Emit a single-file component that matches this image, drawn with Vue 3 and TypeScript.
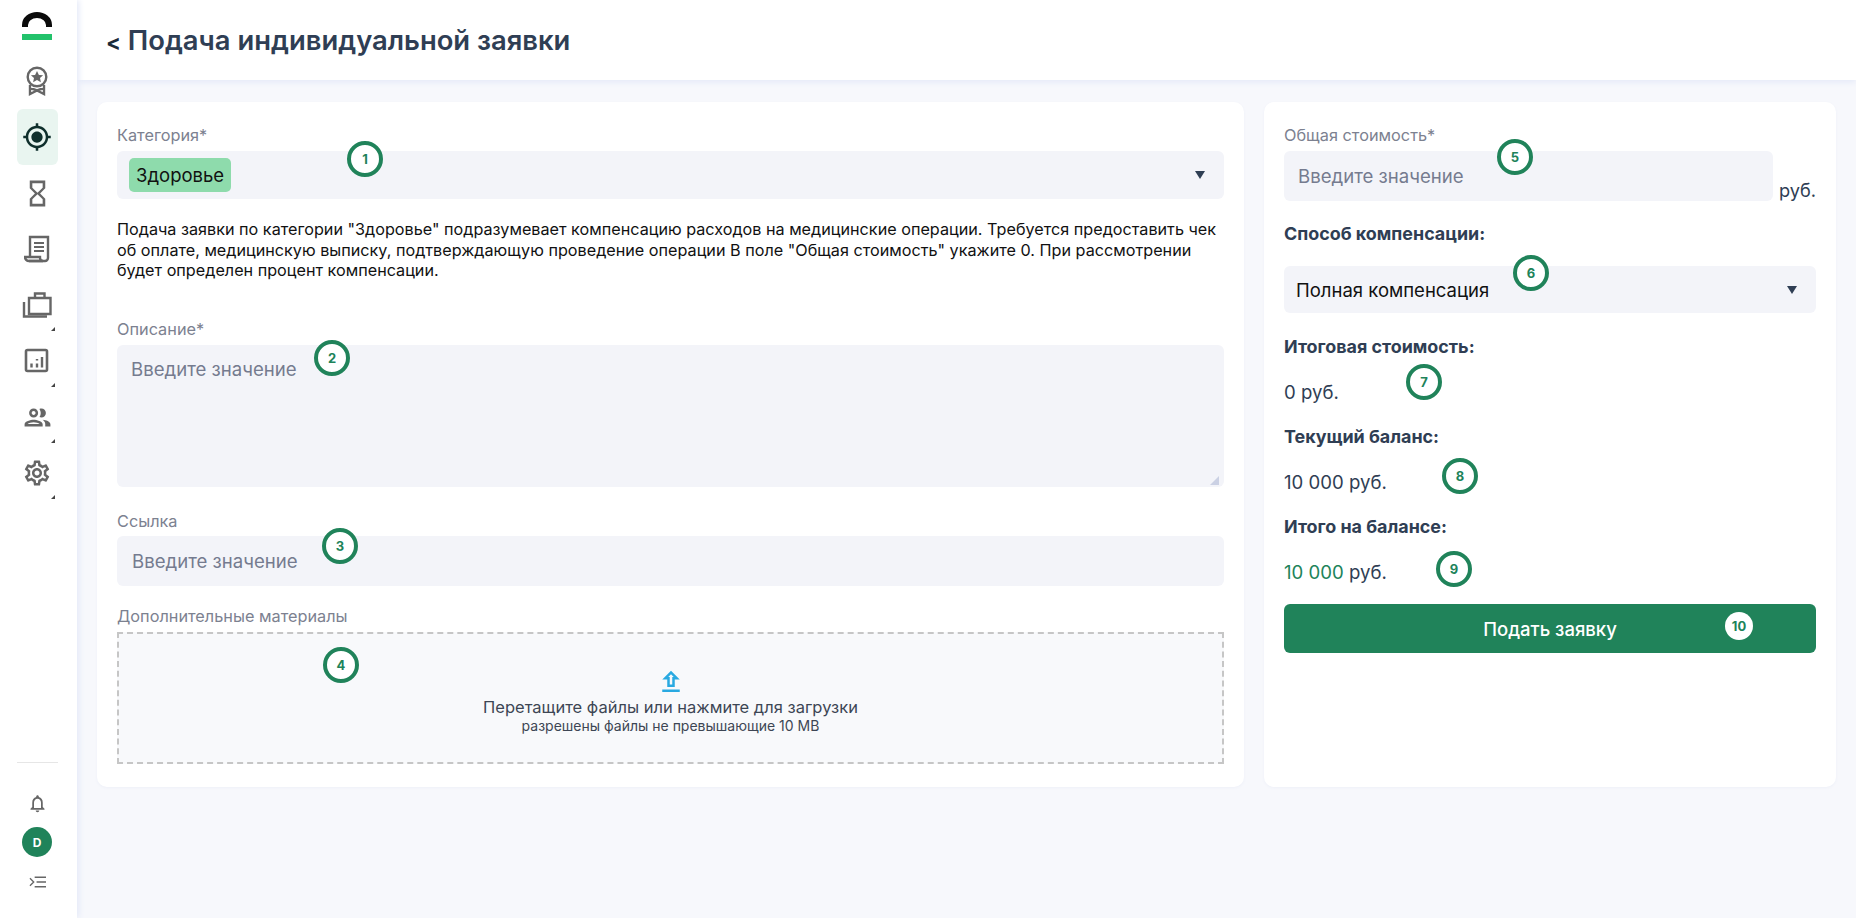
<script setup lang="ts">
interface Mark { n: number; x: number; y: number; light?: boolean }
const marks: Mark[] = [
  { n: 1, x: 365, y: 159 }, { n: 2, x: 332, y: 358 }, { n: 3, x: 340, y: 546 },
  { n: 4, x: 341, y: 665 }, { n: 5, x: 1515, y: 157 }, { n: 6, x: 1531, y: 273 },
  { n: 7, x: 1424, y: 382 }, { n: 8, x: 1460, y: 476 }, { n: 9, x: 1454, y: 569 },
  { n: 10, x: 1739, y: 626, light: true },
]
const markStyle = (m: Mark) => ({ left: `${m.x}px`, top: `${m.y}px` })
</script>

<template>
  <div class="page">
    <aside class="sidebar">
      <svg class="logo" width="30" height="28" viewBox="0 0 30 28">
        <path d="M3 15V13A12 10 0 0 1 27 13v2" fill="none" stroke="#0b0b0b" stroke-width="6" />
        <rect x="0" y="22" width="30" height="6" fill="#22c26b" />
      </svg>
      <nav class="nav">
        <a class="item">
          <svg width="26" height="30" viewBox="0 0 26 30" fill="none" stroke="#666" stroke-width="2.400">
            <circle cx="13" cy="11" r="9.300" />
            <path d="M13 5l1.900 3.900 4.200.4-3.100 2.800.9 4.100-3.900-2.100-3.900 2.100.9-4.100-3.100-2.800 4.200-.4z" fill="#666" stroke="none" />
            <path d="M6 19v9l7-3.500 7 3.500v-9M6 22l7 2.500 7-2.500" />
          </svg>
        </a>
        <a class="item active">
          <svg width="30" height="30" viewBox="0 0 24 24" fill="#0f2f2c">
            <path d="M12 7.500c-2.490 0-4.500 2.010-4.500 4.500s2.010 4.500 4.500 4.500 4.500-2.010 4.500-4.500-2.010-4.500-4.500-4.500zm8.940 3.500c-.46-4.170-3.770-7.480-7.940-7.940V1h-2v2.060C6.830 3.520 3.520 6.830 3.060 11H1v2h2.060c.46 4.170 3.770 7.480 7.940 7.940V23h2v-2.060c4.170-.46 7.480-3.770 7.940-7.940H23v-2h-2.060zM12 19c-3.870 0-7-3.130-7-7s3.130-7 7-7 7 3.130 7 7-3.130 7-7 7z" />
          </svg>
        </a>
        <a class="item">
          <svg width="31" height="31" viewBox="0 0 24 24" fill="#666">
            <path d="M6 2v6h.01L6 8.010 10 12l-4 4 .01.01H6V22h12v-5.990h-.01L18 16l-4-4 4-3.990-.01-.01H18V2H6zm10 14.500V20H8v-3.500l4-4 4 4zm-4-5l-4-4V4h8v3.500l-4 4z" />
          </svg>
        </a>
        <a class="item">
          <svg width="26" height="28" viewBox="0 0 26 28" fill="none" stroke="#666" stroke-width="2.400">
            <path d="M6 21V2h18v21a3 3 0 0 1-3 3H5" />
            <path d="M1 22h15v1a3 3 0 0 0 3 3H5a4 4 0 0 1-4-4z" />
            <path d="M10 8h10M10 12h10M10 16h10" stroke-width="2" />
          </svg>
        </a>
        <a class="item more">
          <svg width="30" height="28" viewBox="0 0 30 28" fill="none" stroke="#666" stroke-width="2.400">
            <path d="M7 7h21.500v16H7z" />
            <path d="M13 7V2.500h9.500V7" />
            <path d="M2 11v14.500h23" />
          </svg>
        </a>
        <a class="item more">
          <svg width="26" height="26" viewBox="0 0 26 26" fill="none" stroke="#666" stroke-width="2.600">
            <rect x="2" y="2" width="21" height="21" rx="1.500" />
            <path d="M7.500 15.500v4M13 11v1.500M13 15.500v4M18 9v10.500" stroke-width="2.400" />
          </svg>
        </a>
        <a class="item more">
          <svg width="31" height="31" viewBox="0 0 24 24" fill="#666">
            <path d="M9 13.750c-2.340 0-7 1.170-7 3.500V19h14v-1.750c0-2.330-4.660-3.500-7-3.500zM4.340 17c.84-.58 2.870-1.250 4.660-1.250s3.820.67 4.660 1.250H4.340zM9 12c1.930 0 3.500-1.570 3.500-3.500S10.930 5 9 5 5.500 6.570 5.500 8.500 7.070 12 9 12zm0-5c.83 0 1.500.67 1.500 1.500S9.830 10 9 10s-1.500-.67-1.500-1.500S8.170 7 9 7zm7.040 6.810c1.160.84 1.960 1.960 1.960 3.440V19h4v-1.750c0-2.020-3.500-3.170-5.960-3.440zM15 12c1.930 0 3.500-1.570 3.500-3.500S16.930 5 15 5c-.54 0-1.040.13-1.500.35.630.89 1 1.980 1 3.150s-.37 2.260-1 3.150c.46.220.96.350 1.500.350z" />
          </svg>
        </a>
        <a class="item more">
          <svg width="30" height="30" viewBox="0 0 24 24" fill="#666">
            <path d="M19.430 12.980c.04-.32.07-.64.07-.98 0-.34-.03-.66-.07-.98l2.110-1.650c.19-.15.24-.42.12-.64l-2-3.460c-.09-.16-.26-.25-.44-.25-.06 0-.12.01-.17.03l-2.490 1c-.52-.4-1.080-.73-1.690-.98l-.38-2.650C14.460 2.180 14.250 2 14 2h-4c-.25 0-.46.18-.49.42l-.38 2.650c-.61.25-1.170.59-1.690.98l-2.490-1c-.06-.02-.12-.03-.18-.03-.17 0-.34.09-.43.25l-2 3.460c-.13.22-.07.49.12.64l2.110 1.650c-.04.32-.07.65-.07.98 0 .33.03.66.07.98l-2.110 1.650c-.19.15-.24.42-.12.64l2 3.460c.09.16.26.25.44.25.06 0 .12-.01.17-.03l2.490-1c.52.4 1.080.73 1.690.98l.38 2.650c.03.24.24.42.49.42h4c.25 0 .46-.18.49-.42l.38-2.650c.61-.25 1.170-.59 1.690-.98l2.490 1c.06.02.12.03.18.03.17 0 .34-.09.43-.25l2-3.460c.12-.22.07-.49-.12-.64l-2.110-1.650zm-1.980-1.710c.04.31.05.52.05.73 0 .21-.02.43-.05.73l-.14 1.130.89.7 1.080.84-.7 1.210-1.270-.51-1.040-.42-.9.68c-.43.32-.84.56-1.250.73l-1.060.43-.16 1.130-.2 1.350h-1.400l-.19-1.350-.16-1.130-1.060-.43c-.43-.18-.83-.41-1.230-.71l-.91-.7-1.060.43-1.270.51-.7-1.210 1.080-.84.89-.7-.14-1.130c-.03-.31-.05-.54-.05-.74s.02-.43.05-.73l.14-1.130-.89-.7-1.080-.84.7-1.210 1.270.51 1.040.42.9-.68c.43-.32.84-.56 1.250-.73l1.060-.43.16-1.130.2-1.350h1.390l.19 1.350.16 1.130 1.060.43c.43.18.83.41 1.230.71l.91.7 1.060-.43 1.270-.51.7 1.210-1.070.85-.89.7.14 1.130zM12 8c-2.210 0-4 1.790-4 4s1.790 4 4 4 4-1.790 4-4-1.790-4-4-4zm0 6c-1.100 0-2-.9-2-2s.9-2 2-2 2 .9 2 2-.9 2-2 2z" />
          </svg>
        </a>
      </nav>
      <div class="foot">
        <svg width="21" height="21" viewBox="0 0 24 24" fill="#666">
          <path d="M12 22c1.100 0 2-.9 2-2h-4c0 1.100.9 2 2 2zm6-6v-5c0-3.070-1.630-5.640-4.500-6.320V4c0-.83-.67-1.500-1.500-1.500s-1.500.67-1.500 1.500v.68C7.640 5.360 6 7.920 6 11v5l-2 2v1h16v-1l-2-2zm-2 1H8v-6c0-2.480 1.510-4.500 4-4.500s4 2.020 4 4.500v6z" />
        </svg>
        <div class="avatar">D</div>
        <svg width="17" height="12" viewBox="0 0 18 12" fill="none" stroke="#666" stroke-width="1.400">
          <path d="M6 1h12M8 6h10M6 11h12M1 2l4 4-4 4" />
        </svg>
      </div>
    </aside>

    <main class="main">
      <header class="topbar">
        <h1 class="title"><span class="back">&lt;</span> Подача индивидуальной заявки</h1>
      </header>
      <section class="content">
        <div class="card">
          <label class="label">Категория*</label>
          <div class="select select-tall">
            <span class="tag">Здоровье</span>
            <i class="caret"></i>
          </div>
          <p class="hint">Подача заявки по категории "Здоровье" подразумевает компенсацию расходов на медицинские операции. Требуется предоставить чек об оплате, медицинскую выписку, подтверждающую проведение операции В поле "Общая стоимость" укажите 0. При рассмотрении будет определен процент компенсации.</p>
          <label class="label label-desc">Описание*</label>
          <div class="area-wrap">
            <textarea class="area" placeholder="Введите значение"></textarea>
            <i class="grip"></i>
          </div>
          <label class="label label-link">Ссылка</label>
          <input class="input input-link" placeholder="Введите значение" />
          <label class="label label-files">Дополнительные материалы</label>
          <div class="drop">
            <svg width="30" height="30" viewBox="0 0 24 24" fill="#29a9e1">
              <path d="M9 16h6v-6h4l-7-7-7 7h4zm3-10.170L14.170 8H13v6h-2V8H9.830L12 5.830zM5 18h14v2H5z" />
            </svg>
            <div class="drop-main">Перетащите файлы или нажмите для загрузки</div>
            <div class="drop-sub">разрешены файлы не превышающие 10 MB</div>
          </div>
        </div>

        <div class="card">
          <label class="label">Общая стоимость*</label>
          <div class="cost-row">
            <input class="input input-cost" placeholder="Введите значение" />
            <span class="unit">руб.</span>
          </div>
          <div class="heading h-method">Способ компенсации:</div>
          <div class="select select-method">
            <span>Полная компенсация</span>
            <i class="caret"></i>
          </div>
          <div class="heading h-total">Итоговая стоимость:</div>
          <div class="value">0 руб.</div>
          <div class="heading">Текущий баланс:</div>
          <div class="value">10 000 руб.</div>
          <div class="heading">Итого на балансе:</div>
          <div class="value"><span class="green">10 000</span> руб.</div>
          <button class="submit" type="button">Подать заявку</button>
        </div>
      </section>
    </main>

    <span
      v-for="m in marks"
      :key="m.n"
      class="mark"
      :class="{ light: m.light }"
      :style="markStyle(m)"
    >{{ m.n }}</span>
  </div>
</template>

<style>
html, body { margin: 0; background: #f7f8fc; }
</style>

<style scoped>
.page {
  position: relative;
  display: flex;
  min-height: 918px;
  overflow: hidden;
  font-family: Inter, "Noto Sans", sans-serif;
  font-size: 16px;
  color: #111;
  background: #f7f8fc;
}
.sidebar {
  flex: 0 0 77px;
  display: flex;
  flex-direction: column;
  align-items: center;
  height: 918px;
  box-sizing: border-box;
  padding: 12px 3px 0 0;
  background: #fff;
  box-shadow: 2px 0 6px #e4e9f8;
  z-index: 2;
}
.logo { display: block; }
.nav { display: flex; flex-direction: column; align-items: center; margin-top: 13px; }
.item {
  position: relative;
  display: flex;
  align-items: center;
  justify-content: center;
  width: 41px;
  height: 56px;
  border-radius: 6px;
}
.item.active { background: #e9f5f0; }
.item.more::after {
  content: "";
  position: absolute;
  right: 3px;
  bottom: 2px;
  border-left: 4px solid transparent;
  border-bottom: 4px solid #444;
}
.foot {
  display: flex;
  flex-direction: column;
  align-items: center;
  width: 41px;
  margin-top: auto;
  padding: 30px 0;
  border-top: 1px solid #e6e6e6;
}
.avatar {
  display: flex;
  align-items: center;
  justify-content: center;
  width: 30px;
  height: 30px;
  margin: 13px 0 19px;
  border-radius: 50%;
  background: #20835a;
  color: #fff;
  font-size: 12px;
  font-weight: 700;
}
.main { flex: 1; min-width: 0; display: flex; flex-direction: column; }
.topbar {
  height: 80px;
  display: flex;
  align-items: center;
  padding-left: 29px;
  box-sizing: border-box;
  background: #fff;
  box-shadow: 0 2px 6px #e4e9f8;
  z-index: 1;
}
.title { margin: 0; font-size: 27.400px; font-weight: 600; color: #2f3e54; }
.back { font-size: 22px; font-weight: 700; color: #1b2a3a; }
.content {
  display: grid;
  grid-template-columns: 1fr 572px;
  gap: 20px;
  align-items: start;
  padding: 22px 20px 0;
}
.card {
  display: flex;
  flex-direction: column;
  height: 685px;
  box-sizing: border-box;
  padding: 21px 20px 0;
  background: #fff;
  border-radius: 10px;
  box-shadow: 0 1px 3px #eef0f8;
}
.label { display: block; height: 24px; line-height: 24px; font-size: 16.300px; color: #7c8190; margin-bottom: 4px; }
.label-desc { margin-top: 36px; }
.label-link { margin-top: 22px; margin-bottom: 3px; }
.label-files { margin-top: 18px; margin-bottom: 4px; }
.select {
  position: relative;
  display: flex;
  align-items: center;
  box-sizing: border-box;
  border-radius: 6px;
  background: #f3f4f9;
  color: #111;
  font-size: 18.500px;
}
.select-tall { height: 48px; padding-left: 12px; }
.select-method { height: 47px; padding-left: 12px; margin-top: 20px; }
.tag {
  display: flex;
  align-items: center;
  height: 34px;
  padding: 0 7px;
  border-radius: 5px;
  background: #8edbac;
}
.caret {
  position: absolute;
  right: 19px;
  top: 50%;
  margin-top: -4px;
  border-left: 5px solid transparent;
  border-right: 5px solid transparent;
  border-top: 8px solid #2f3e54;
}
.hint { margin: 20px 0 0; font-size: 16.200px; line-height: 20.500px; color: #111; }
.area-wrap { position: relative; }
.area, .input {
  display: block;
  width: 100%;
  box-sizing: border-box;
  border: 0;
  border-radius: 6px;
  outline: 0;
  background: #f3f4f9;
  font: inherit;
  font-size: 18.600px;
  color: #111;
}
.area { height: 142px; padding: 13px 14px; resize: none; }
.grip {
  position: absolute;
  right: 5px;
  bottom: 2px;
  border-left: 9px solid transparent;
  border-bottom: 9px solid #cbd1e4;
}
.input { padding: 0 14px; }
.area::placeholder, .input::placeholder { color: #757b8f; opacity: 1; }
.input-link { height: 50px; padding-left: 15px; }
.drop {
  display: flex;
  flex-direction: column;
  align-items: center;
  justify-content: center;
  height: 132px;
  box-sizing: border-box;
  padding-top: 7px;
  border: 2px dashed #c6c6c6;
  background: #f8f9fb;
  color: #3d4654;
}
.drop-main { font-size: 16.500px; line-height: 20px; }
.drop-sub { font-size: 14px; line-height: 18px; }
.cost-row { display: flex; align-items: flex-end; gap: 6px; }
.input-cost { flex: 1; width: auto; height: 50px; min-width: 0; }
.unit { font-size: 18.200px; line-height: 22px; color: #2f3e54; }
.heading { height: 24px; line-height: 24px; margin-top: 21px; font-size: 17.900px; font-weight: 700; color: #2f3e54; }
.value { height: 24px; line-height: 24px; margin-top: 21px; font-size: 18.600px; color: #2f3e54; }
.h-method { margin-top: 21px; }
.h-total { margin-top: 22px; }
.green { color: #20835a; }
.submit {
  display: block;
  width: 100%;
  height: 49px;
  margin-top: 20px;
  border: 0;
  border-radius: 6px;
  background: #20835a;
  color: #fff;
  font: inherit;
  font-size: 18.500px;
  font-weight: 500;
}
.mark {
  position: absolute;
  display: flex;
  align-items: center;
  justify-content: center;
  width: 36px;
  height: 36px;
  margin: -18px 0 0 -18px;
  box-sizing: border-box;
  border: 4px solid #20835a;
  border-radius: 50%;
  background: #fff;
  color: #20835a;
  font-size: 13px;
  font-weight: 700;
  z-index: 3;
}
.mark.light {
  width: 28px;
  height: 28px;
  margin: -14px 0 0 -14px;
  border: 0;
}
</style>
